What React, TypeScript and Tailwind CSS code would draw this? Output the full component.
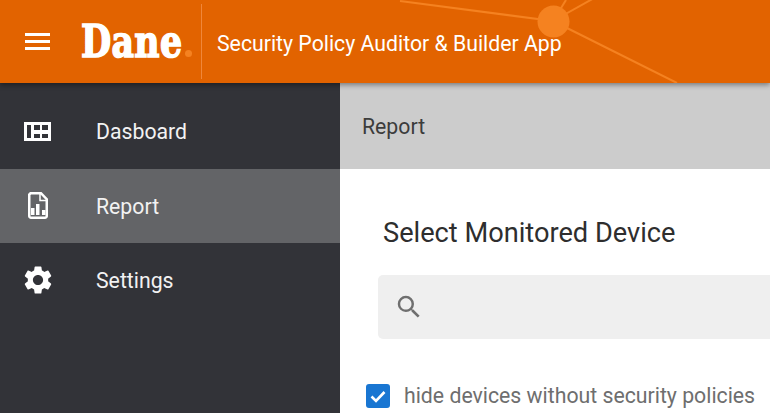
function NavItem({ label, active, icon }: { label: string; active?: boolean; icon: React.ReactNode }) {
	return (
		<div className={`flex h-[74.5px] items-center ${active ? "bg-[#636467]" : ""}`}>
			<div className="flex w-[96px] shrink-0 justify-center pr-[21px] text-white">{icon}</div>
			<span className="mt-[2px] text-[21.25px] text-[#f2f2f2]">{label}</span>
		</div>
	);
}

function HeaderLines() {
	return (
		<svg className="absolute left-0 top-0 h-[83px] w-[770px]" viewBox="0 0 770 83" fill="none">
			<g stroke="#f58220" strokeWidth="2">
				<path d="M400 1 L553 21" />
				<path d="M553 21 L566 0" />
				<path d="M553 21 L596 -3" />
				<path d="M553 21 L677 83" />
			</g>
			<circle cx="553.5" cy="21.5" r="16" fill="#f58220" />
		</svg>
	);
}

export default function App() {
	return (
		<div className="flex h-[413px] w-[770px] flex-col overflow-hidden bg-white font-['Roboto',sans-serif]">
			<header className="relative z-10 flex h-[83px] shrink-0 items-center bg-[#e26300] shadow-[0_2px_5px_rgba(0,0,0,0.4)]">
				<HeaderLines />
				<div className="relative ml-[25px] flex w-[25px] flex-col gap-[4.5px]">
					<div className="h-[2.5px] bg-white" />
					<div className="h-[2.5px] bg-white" />
					<div className="h-[2.5px] bg-white" />
				</div>
				<div className="relative ml-[31px] flex h-[75px] w-[121px] items-center border-r border-[#f0873a]">
					<span className="mt-[1px] inline-block origin-left scale-x-[0.79] font-['DejaVu_Serif',serif] text-[44px] leading-none font-black tracking-[0.4px] text-white [-webkit-text-stroke:1.6px_white]">
						Dane
					</span>
					<div className="absolute left-[104px] top-[46px] h-[7px] w-[7px] rounded-full bg-[#f58220]" />
				</div>
				<h1 className="relative mt-[4px] ml-[15px] text-[21.25px] text-white">Security Policy Auditor &amp; Builder App</h1>
			</header>
			<div className="flex flex-1">
				<aside className="w-[340px] shrink-0 bg-[#323338] pt-[11px]">
					<NavItem
						label="Dasboard"
						icon={
							<svg width="27" height="19" viewBox="0 0 27 19" fill="#fff" fillRule="evenodd">
								<path d="M0 0h27v19H0zM3 3v13h4V3zM10 3v5h6V3zM18 3v5h6V3zM10 12v4h6v-4zM18 12v4h6v-4z" />
							</svg>
						}
					/>
					<NavItem
						active
						label="Report"
						icon={
							<svg width="20" height="27" viewBox="0 0 20 27" fill="none">
								<path d="M2.5 1.25h10.5l5.75 6V24a1.75 1.75 0 0 1-1.75 1.75H3A1.75 1.75 0 0 1 1.25 24V2.5z" stroke="#fff" strokeWidth="2.5" />
								<path d="M12 1.5v7h7" stroke="#fff" strokeWidth="1.5" fill="none" />
								<path d="M2 15h3.5v7H2zM7 11h3.5v11H7zM13 17h3.5v5H13z" fill="#fff" transform="translate(1 1)" />
							</svg>
						}
					/>
					<NavItem
						label="Settings"
						icon={
							<svg width="34" height="34" viewBox="0 0 24 24" fill="#fff">
								<path d="M19.14 12.94c.04-.3.06-.61.06-.94 0-.32-.02-.64-.07-.94l2.03-1.58a.49.49 0 0 0 .12-.61l-1.92-3.32a.488.488 0 0 0-.59-.22l-2.39.96c-.5-.38-1.03-.7-1.62-.94l-.36-2.54a.484.484 0 0 0-.48-.41h-3.84c-.24 0-.43.17-.47.41l-.36 2.54c-.59.24-1.13.57-1.62.94l-2.39-.96c-.22-.08-.47 0-.59.22L2.74 8.87c-.12.21-.08.47.12.61l2.03 1.58c-.05.3-.09.63-.09.94s.02.64.07.94l-2.03 1.58a.49.49 0 0 0-.12.61l1.92 3.32c.12.22.37.29.59.22l2.39-.96c.5.38 1.03.7 1.62.94l.36 2.54c.05.24.24.41.48.41h3.84c.24 0 .44-.17.47-.41l.36-2.54c.59-.24 1.13-.56 1.62-.94l2.39.96c.22.08.47 0 .59-.22l1.92-3.32c.12-.22.07-.47-.12-.61l-2.01-1.58zM12 15.6c-1.98 0-3.6-1.62-3.6-3.6s1.62-3.6 3.6-3.6 3.6 1.62 3.6 3.6-1.62 3.6-3.6 3.6z" />
							</svg>
						}
					/>
				</aside>
				<main className="min-w-0 flex-1">
					<div className="flex h-[86px] items-center bg-[#cccccc] pt-[2px] pl-[22px] text-[21.25px] text-[#3c3c3c]">Report</div>
					<div className="pl-[38px]">
						<h2 className="mt-[46px] ml-[5px] text-[27.2px] leading-[36px] text-[#2e2e2e]">Select Monitored Device</h2>
						<div className="mt-[24px] flex h-[64px] items-center rounded-l-[5px] bg-[#efefef] pl-[16px]">
							<svg width="30" height="30" viewBox="0 0 24 24" fill="#6f6f6f">
								<path d="M15.5 14h-.79l-.28-.27A6.471 6.471 0 0 0 16 9.5 6.5 6.5 0 1 0 9.5 16c1.61 0 3.09-.59 4.23-1.57l.27.28v.79l5 4.99L20.49 19l-4.99-5zm-6 0C7.01 14 5 11.99 5 9.5S7.01 5 9.5 5 14 7.01 14 9.5 11.99 14 9.5 14z" />
							</svg>
						</div>
						<label className="mt-[41px] -ml-[12px] flex items-center">
							<span className="flex h-[24px] w-[24px] items-center justify-center rounded-[3px] bg-[#1976d2]">
								<svg width="18" height="18" viewBox="0 0 18 18" fill="none" stroke="#fff" strokeWidth="2.6">
									<path d="M2.5 9.5l4.5 4.5 8.5-9" />
								</svg>
							</span>
							<span className="ml-[14px] text-[21.25px] text-[#6e6e6e]">hide devices without security policies</span>
						</label>
					</div>
				</main>
			</div>
		</div>
	);
}
